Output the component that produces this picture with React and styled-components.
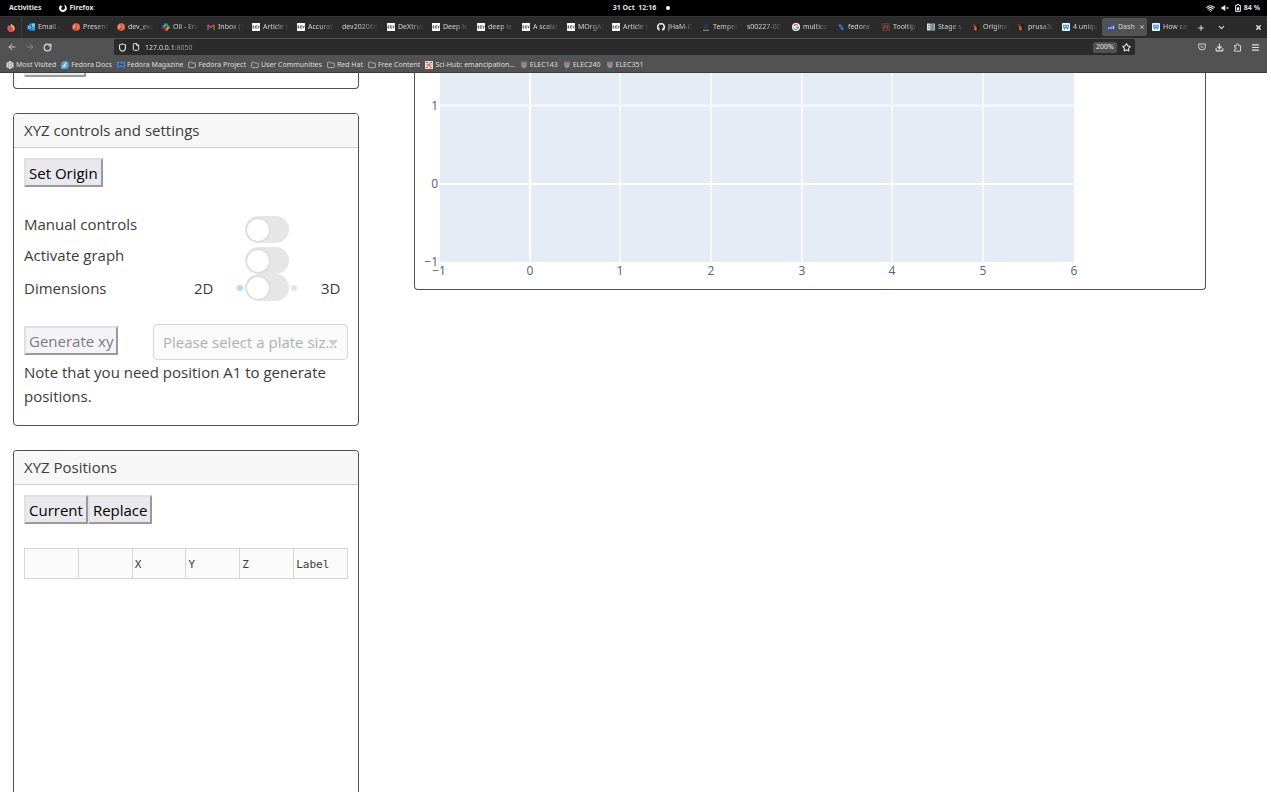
import React from "react";
import styled, { createGlobalStyle, css } from "styled-components";
import {
  ArrowLeft, ArrowRight, RotateCw, Shield, File, Star, Download, Puzzle, Menu,
  Plus, ChevronDown, X, Wifi, Settings, Folder,
} from "lucide-react";

const GlobalStyle = createGlobalStyle`
  *, *::before, *::after { box-sizing: border-box; }
  html, body { margin: 0; background: #fff; }
  button, input, select { font: inherit; margin: 0; }
  svg { display: block; flex: none; }
`;

const Desktop = styled.div`
  display: flex;
  flex-direction: column;
  height: calc(100vh - 5px);
  margin-right: 4px;
  overflow: hidden;
  font-family: "Noto Sans", sans-serif;
  font-size: 7px;
  line-height: 10px;
  color: #e0e0e0;
`;

const SystemBar = styled.header`
  display: grid;
  grid-template-columns: 1fr auto 1fr;
  align-items: center;
  flex: none;
  height: 16px;
  padding: 0 7px 0 9px;
  background: #000;
  font-weight: 700;
`;

const SystemGroup = styled.div`
  display: flex;
  align-items: center;
  justify-content: ${(p) => (p.$end ? "flex-end" : "flex-start")};
  gap: ${(p) => p.$gap}px;
`;

/* The empty side balances the notice dot, so that the clock stays centred. */
const Clock = styled(SystemGroup)`
  padding-left: 14px;
`;

const BarButton = styled.button`
  display: flex;
  align-items: center;
  justify-content: center;
  gap: 3px;
  padding: 0;
  border: 0;
  background: none;
  color: inherit;
  white-space: pre;
  opacity: ${(p) => (p.disabled ? 0.4 : 1)};
`;

const NoticeDot = styled.span`
  width: 4px;
  height: 4px;
  border-radius: 50%;
  background: #fff;
`;

const TabStrip = styled.nav`
  display: flex;
  align-items: stretch;
  flex: none;
  height: 22px;
  background: #2b2b2b;
  border-top: 1px solid #353535;
`;

const PinnedTab = styled(BarButton)`
  width: 22px;
  border-right: 1px solid #404040;
`;

const Tab = styled.button`
  display: flex;
  align-items: center;
  flex: 0 1 45px;
  gap: 3px;
  min-width: 0;
  margin: 1px 0 2px;
  padding: 0 2px 0 5px;
  border: 0;
  border-radius: 2px;
  background: ${(p) => (p.$active ? "#525252" : "transparent")};
  color: #d6d6d6;
`;

const TabTitle = styled.span`
  flex: 1 1 0;
  min-width: 0;
  overflow: hidden;
  text-align: left;
  white-space: nowrap;
  ${(p) => !p.$active && css`mask-image: linear-gradient(to right, #000 45%, transparent 96%);`}
`;

const StripActions = styled.div`
  display: flex;
  flex: 1;
  align-items: center;
  padding: 0 5px 0 5px;
  gap: 12px;
`;

const StripClose = styled(BarButton)`
  margin-left: auto;
`;

const Toolbar = styled.div`
  display: flex;
  align-items: center;
  flex: none;
  height: 18px;
  padding: 0 7px;
  background: #525252;
`;

const NavGroup = styled.div`
  display: flex;
  gap: 8px;
  width: 107px;
`;

const AddressBar = styled.div`
  display: flex;
  align-items: center;
  flex: 1;
  height: 16px;
  padding: 0 4px;
  gap: 5px;
  border-radius: 2px;
  background: #2b2b2b;
`;

/* The host is bright and the port that follows it is dimmed. */
const Address = styled.input`
  flex: 1;
  min-width: 0;
  height: 12px;
  padding: 0;
  border: 0;
  outline: 0;
  background: linear-gradient(to right, #f2f2f2 30px, #a0a0a0 30px);
  background-clip: text;
  -webkit-background-clip: text;
  color: transparent;
`;

const ZoomBadge = styled.button`
  width: 24px;
  height: 11px;
  padding: 0;
  border: 0;
  border-radius: 2px;
  background: #525252;
  color: #e6e6e6;
  line-height: 10px;
`;

const ToolGroup = styled.div`
  display: flex;
  justify-content: flex-end;
  gap: 9px;
  width: 125px;
`;

const Bookmarks = styled.nav`
  display: flex;
  align-items: center;
  flex: none;
  gap: 5px;
  height: 17px;
  padding: 2px 6px 0;
  background: #525252;
  border-bottom: 1px solid #3c3c3c;
`;

const Bookmark = styled.a`
  display: flex;
  align-items: center;
  gap: 2px;
  color: #dedede;
  text-decoration: none;
  white-space: nowrap;
`;

const Page = styled.main`
  display: grid;
  grid-template-columns: 346fr 792fr;
  grid-template-rows: 100%;
  column-gap: 55px;
  flex: 1;
  min-height: 0;
  padding: 0 61px 0 13px;
  overflow: hidden;
  background: #fff;
  color: #3b3b3b;
  font-family: "Open Sans", sans-serif;
  font-size: 15px;
  line-height: 24px;
`;

const Column = styled.div`
  display: flex;
  flex-direction: column;
  gap: 24px;
  min-width: 0;
`;

const Card = styled.section`
  flex: ${(p) => (p.$grow ? "1 0 auto" : "none")};
  border: 1px solid #505050;
  border-top-width: ${(p) => (p.$cutTop ? 0 : "1px")};
  border-bottom-width: ${(p) => (p.$grow ? 0 : "1px")};
  border-radius: ${(p) => (p.$cutTop ? "0 0 4px 4px" : p.$grow ? "4px 4px 0 0" : "4px")};
  overflow: hidden;
`;

const CardHeader = styled.h2`
  margin: 0;
  padding: 4px 10px 5px;
  border-bottom: 1px solid #cfcfcf;
  background: #f7f7f7;
  font-size: 15px;
  font-weight: 400;
  line-height: 24px;
`;

const CardBody = styled.div`
  padding: 10px 10px 17px;
`;

const ScrolledBody = styled.div`
  display: flex;
  align-items: flex-end;
  height: 15px;
  padding: 0 10px 11px;
`;

const ActionButton = styled.button`
  height: 29px;
  min-width: ${(p) => p.$minWidth || 0}px;
  padding: 0 3px;
  border: 2px solid;
  border-color: #e0e0e2 #9a9a9a #9a9a9a #e0e0e2;
  background: #e9e9ed;
  color: #000;
  line-height: 24px;
  white-space: nowrap;
  &:disabled { background: #f4f4f6; color: #7c7c80; }
`;

const ButtonRow = styled.div`
  display: flex;
`;

const SettingList = styled.div`
  padding: 25px 0 23px;
`;

const SettingRow = styled.div`
  display: grid;
  grid-template-columns: 170fr 43fr 84fr 27fr;
  align-items: ${(p) => (p.$centred ? "center" : "start")};
`;

const SwitchCell = styled.span`
  display: flex;
  align-items: center;
  gap: 2px;
  padding-top: ${(p) => (p.$low ? 4 : 0)}px;
`;

const EndDot = styled.span`
  width: 6px;
  height: 6px;
  border-radius: 50%;
  background: ${(p) => p.$color};
`;

const Switch = styled.input`
  appearance: none;
  display: flex;
  align-items: center;
  width: 44px;
  height: 27px;
  padding: 0 2px;
  border-radius: 14px;
  background: #e6e6e6;
  &::before {
    content: "";
    width: 22px;
    height: 22px;
    border-radius: 50%;
    background: #fff;
    box-shadow: 0 0 2px #bbb;
  }
  &:checked { justify-content: flex-end; background: #a6e0fb; }
`;

const PlateRow = styled.div`
  display: flex;
  align-items: flex-start;
  justify-content: space-between;
  > button { margin-top: 2px; }
`;

const SelectBox = styled.div`
  position: relative;
  flex: 0 1 195px;
  svg { position: absolute; right: 10px; top: 16px; }
`;

const PlateSelect = styled.select`
  appearance: none;
  display: block;
  width: 100%;
  height: 36px;
  padding: 0 9px;
  border: 1px solid #d6d6d6;
  border-radius: 4px;
  background: #fafafa;
  color: #b0b0b0;
  opacity: 1;
`;

const Note = styled.p`
  margin: 0;
`;

const PositionTable = styled.table`
  width: 100%;
  margin-top: 24px;
  border-collapse: collapse;
  table-layout: fixed;
  font-family: "DejaVu Sans Mono", monospace;
  font-size: 11px;
  line-height: 16px;
  th {
    height: 30px;
    padding: 2px 2px 0;
    border: 1px solid #d6d6d6;
    background: #fafafa;
    font-weight: 400;
    text-align: left;
  }
`;

const Chart = styled.svg`
  width: 100%;
  height: auto;
  text { fill: #506080; font-family: "Open Sans", sans-serif; font-size: 12px; }
`;

/* Favicons, each drawn on an 8 x 8 grid. */
const favicons = {
  firefox: (
    <>
      <path d="M.3 4.200Q.3 2.500 1.500 1.200l.6 1Q3.200 1.800 3.700.9L4.500.1Q5 1 6.200 1.800 7.800 3 7.700 4.700 7.200 7.900 4 7.900.7 7.800.3 4.200Z" fill="#ff5a36" />
      <path d="M3.700 1 4.500.1Q5 1 6.200 1.800 7.800 3 7.600 4.600 7.300 6.500 5.700 7 6.800 4.500 5.200 3 4 2.500 3.700 1Z" fill="#ffc52f" />
      <circle cx="3.800" cy="4.500" r="1.700" fill="#8a4be8" />
      <path d="M.4 4.500C.5 7 2.300 7.900 4 7.900c1.500 0 2.600-.8 3.100-1.700-1.400.9-3 .9-4 .2Z" fill="#f0355a" />
    </>
  ),
  outlook: (
    <>
      <path d="M2.500.5H8V7.500H2.500Z" fill="#28a8ea" />
      <path d="M5 .5h3v3H5Z" fill="#50d9ff" />
      <path d="M0 2h5v4.600H0Z" fill="#0f6cbd" />
      <circle cx="2.500" cy="4.300" r="1.200" fill="none" stroke="#fff" strokeWidth=".7" />
    </>
  ),
  powerpoint: (
    <>
      <circle cx="4.200" cy="4" r="3.800" fill="#ed6c47" />
      <path d="M0 2h4.600v4.400H0Z" fill="#c43e1c" />
      <path d="M1.800 5.800V2.700h.9a.8.8 0 0 1 0 1.700h-.9" fill="none" stroke="#fff" strokeWidth=".7" />
    </>
  ),
  slack: (
    <g strokeWidth="1.400" strokeLinecap="round">
      <path d="M3.100 1v2M.9 3.100h2.200" stroke="#36c5f0" />
      <path d="M5 3V.9M7.200 3.100H5.200" stroke="#2eb67d" />
      <path d="M5 5v2.200M5.200 5h2" stroke="#ecb22e" />
      <path d="M3.100 5v2.200M.9 5h2" stroke="#e01e5a" />
    </g>
  ),
  gmail: (
    <g fill="none" strokeWidth="1.300">
      <path d="M1 7V2" stroke="#4285f4" />
      <path d="M7 7V2" stroke="#34a853" />
      <path d="m.8 1.700 3.200 2.600 3.200-2.600" stroke="#ea4335" />
    </g>
  ),
  dev: (
    <>
      <path d="M0 0h8v8H0Z" fill="#fff" />
      <path d="M1 2.700v2.600h.5q1-1.300 0-2.600ZM4.900 2.700H3.600v2.600h1.300M3.600 4h1.100M5.700 2.600l.8 2.600.8-2.600" fill="none" stroke="#222" strokeWidth=".6" />
    </>
  ),
  github: (
    <path d="M4 0a4 4 0 0 0-1.300 7.800V6.700C1.700 6.900 1.400 6 1.200 5.800c.6-.1.800.9 1.500.5.1-.4.200-.5.400-.6C1.400 5.400 1.100 3.200 2 2.500V1.400l1.100.4h1.800L6 1.400v1.100c.9.800.6 2.900-1.100 3.200.4.300.4.800.4 2.100A4 4 0 0 0 4 0Z" fill="#f4f4f4" />
  ),
  stack: (
    <>
      <path d="M2.500 1h3L7 3.500 5.500 5.500h-3L1 3.500Z" fill="#193a5c" />
      <path d="M1 7.300h6" stroke="#e08a32" />
    </>
  ),
  google: (
    <>
      <circle cx="4" cy="4" r="4" fill="#fff" />
      <g fill="none" strokeWidth="1.200">
        <path d="M5.800 2.300A2.500 2.500 0 0 0 1.800 2.800" stroke="#ea4335" />
        <path d="M1.800 2.800a2.500 2.500 0 0 0 0 2.500" stroke="#fbbc05" />
        <path d="M1.800 5.300a2.500 2.500 0 0 0 3.800.6" stroke="#34a853" />
        <path d="M5.600 5.900q.9-.7.9-1.800H4" stroke="#4285f4" />
      </g>
    </>
  ),
  fedoraforum: (
    <>
      <path d="M1.500 1h3l2.500 4v2H4L2 4Z" fill="#294f91" />
      <path d="m2 2 2 1.500M4 5l2 1" stroke="#9ab8e8" strokeWidth=".6" />
    </>
  ),
  plotly: (
    <>
      <path d="M.5.5h7v7h-7Z" fill="#3a2c2c" stroke="#7d4040" strokeWidth=".6" />
      <path d="M2.200 1.500v5M5.800 1.500v5M2.500 4h3" stroke="#a06060" strokeWidth=".8" />
    </>
  ),
  stage: (
    <>
      <path d="M0 .5h3.600v7H0Z" fill="#d9e4ea" />
      <path d="M4.200.5H8v7H4.200Z" fill="#9bb3c0" />
      <path d="M5 2h2M5 4h2M5 6h2M1 2.500h1.600M1 5h1.600" stroke="#40596a" strokeWidth=".8" />
    </>
  ),
  prusa: (
    <>
      <path d="M.8.300 3 1.500v3L1.500 3Z" fill="#8a3a1c" />
      <path d="M2.500 2.500Q5 3.500 4.800 5.500L4 8 2 6.500Z" fill="#d9602c" />
      <path d="M5.200 1.500h1.300v5H5.200Z" fill="#161616" />
    </>
  ),
  wps: (
    <>
      <rect width="8" height="8" rx="1" fill="#f5f8ff" />
      <path d="M1 2.300h6M1.300 3l1.200 2.800L4 3.500l1.500 2.300L6.700 3" fill="none" stroke="#2f8cf0" strokeWidth="1.100" />
    </>
  ),
  dash: (
    <>
      <rect width="8" height="8" rx="1" fill="#3b5382" />
      <path d="M1.500 6V4.500M3.200 6V4M4.900 6V3.500M6.600 6V2.500" stroke="#c3d2ef" />
    </>
  ),
  fedora: (
    <>
      <path d="M4 0a4 4 0 1 1 0 8H0V4a4 4 0 0 1 4-4Z" fill="#51a2da" />
      <path d="M5.800 2.200C4.600 1.600 4 2.300 4 3.100V5c0 1.300-1.600 1.500-1.900.5-.2-.9.500-1.400 1.600-1.200h1.500" fill="none" stroke="#fff" strokeWidth=".9" />
    </>
  ),
  magazine: (
    <>
      <path d="M0 .7h8v6.800L6.500 6H1.500L0 7.500Z" fill="#4a80cc" />
      <path d="M2.300 5V2.500L4 3.700l1.700-1.200V5" fill="none" stroke="#1c3560" />
    </>
  ),
  scihub: (
    <>
      <path d="M0 0h8v8H0Z" fill="#f0d3d0" />
      <path d="M1 1.500h2M5 1.500h2M1 6.500h2M5 6.500h2M1.500 4h1.500M5 4h1.500M4 2.500v3M3 3l2 2" stroke="#b24f4b" strokeWidth=".9" />
    </>
  ),
  elec: (
    <>
      <path d="M1 .5h6V5Q6 7 4 7.800 2 7 1 5Z" fill="#4a86b8" />
      <path d="M1 2h6v2H1Z" fill="#e06a45" />
      <path d="M2.500 5.200h3" stroke="#e9c070" strokeWidth=".9" />
    </>
  ),
};

const Favicon = ({ name }) => (
  <svg width="8" height="8" viewBox="0 0 8 8" aria-hidden="true">{favicons[name]}</svg>
);

const tabs = [
  ["outlook", "Email -"], ["powerpoint", "Present"], ["powerpoint", "dev_eva"],
  ["slack", "Oli - Eng"], ["gmail", "Inbox (1"], ["dev", "Article t"],
  ["dev", "Accurate"], [null, "dev202068"], ["dev", "DeXtrus"],
  ["dev", "Deep le"], ["dev", "deep le"], ["dev", "A scalab"],
  ["dev", "MOrgAn"], ["dev", "Article t"], ["github", "JHaM-C"],
  ["stack", "Temper"], [null, "s00227-00"], ["google", "multicol"],
  ["fedoraforum", "fedora -"], ["plotly", "Tooltip"], ["stage", "Stage s"],
  ["prusa", "Original"], ["prusa", "prusa3d"], ["wps", "4 uniqu"],
  ["dash", "Dash"], ["wps", "How can"],
];

const bookmarks = [
  ["settings", "Most Visited"], ["fedora", "Fedora Docs"], ["magazine", "Fedora Magazine"],
  ["folder", "Fedora Project"], ["folder", "User Communities"], ["folder", "Red Hat"],
  ["folder", "Free Content"], ["scihub", "Sci-Hub: emancipation…"],
  ["elec", "ELEC143"], ["elec", "ELEC240"], ["elec", "ELEC351"],
];

const BookmarkIcon = ({ name }) => {
  if (name === "folder") return <Folder size={8} />;
  if (name === "settings") return <Settings size={8} strokeWidth={4} />;
  return <Favicon name={name} />;
};

const FirefoxMark = () => (
  <svg width="8" height="8" viewBox="0 0 8 8" aria-hidden="true">
    <path d="M1.500 1.300A3.800 3.800 0 1 0 7 2L5.500.2v1.700C6.700 4 5.500 5.900 4 5.900S1.900 4.800 2.300 3.500l1.500-.4Z" fill="#eee" />
  </svg>
);

const MutedSpeaker = () => (
  <svg width="8" height="8" viewBox="0 0 8 8" aria-hidden="true">
    <path d="M.5 2.700H2L4.300.8v6.400L2 5.300H.5Z" fill="#eee" />
    <path d="m5.500 3 2 2m0-2-2 2" stroke="#ccc" strokeWidth=".9" />
  </svg>
);

const Battery = () => (
  <svg width="6" height="8" viewBox="0 0 6 8" aria-hidden="true">
    <path d="M.6 1.400H2V.5h2v.9h1.400v6H.6Z" fill="none" stroke="#eee" />
    <path d="M1.800 3.300h2.400v3H1.800Z" fill="#eee" />
  </svg>
);

const Pocket = () => (
  <svg width="8" height="8" viewBox="0 0 8 8" fill="none" stroke="currentColor" strokeWidth=".9" aria-hidden="true">
    <path d="M.6 1h6.800v2.500a3.400 3.400 0 0 1-6.800 0Z" />
    <path d="m2.300 3 1.700 1.700L5.700 3" />
  </svg>
);

const Extension = () => (
  <svg width="9" height="9" viewBox="0 0 9 9" fill="none" stroke="currentColor" strokeWidth=".9" aria-hidden="true">
    <path d="M1.500 8.200V6.200h.7a1 1 0 0 0 0-2h-.7V2.600h2V1.700a1 1 0 0 1 2 0v.9h2v5.600Z" />
  </svg>
);

const columnLines = [115, 205, 296, 387, 477, 568];
const xTicks = [["−1", 24], ["0", 115], ["1", 205], ["2", 296], ["3", 387], ["4", 477], ["5", 568], ["6", 659]];
const yTicks = [["1", 33], ["0", 111], ["−1", 189]];

const PositionChart = () => (
  <Chart viewBox="0 0 790 216" role="img" aria-label="XY position graph">
    <rect x="25" y="0" width="634" height="189" fill="#e5ecf6" />
    {columnLines.map((x, i) => (
      <line key={x} x1={x} x2={x} y1="0" y2="189" stroke="#fff" strokeWidth={i ? 1.3 : 2} />
    ))}
    <line x1="25" x2="659" y1="32.5" y2="32.5" stroke="#fff" strokeWidth="1.3" />
    <line x1="25" x2="659" y1="111" y2="111" stroke="#fff" strokeWidth="2" />
    {xTicks.map(([t, x]) => <text key={t} x={x} y="202" textAnchor="middle">{t}</text>)}
    {yTicks.map(([t, y]) => <text key={t} x="23" y={y + 4} textAnchor="end">{t}</text>)}
  </Chart>
);

export default function App() {
  return (
    <Desktop>
      <GlobalStyle />
      <SystemBar>
        <SystemGroup $gap={17}>
          <BarButton>Activities</BarButton>
          <BarButton><FirefoxMark />Firefox</BarButton>
        </SystemGroup>
        <Clock $gap={10}>
          <BarButton>{"31 Oct  12:16"}</BarButton>
          <NoticeDot />
        </Clock>
        <SystemGroup $gap={6} $end>
          <Wifi size={9} strokeWidth={3} />
          <MutedSpeaker />
          <BarButton><Battery />84 %</BarButton>
        </SystemGroup>
      </SystemBar>

      <TabStrip aria-label="Tabs">
        <PinnedTab aria-label="Firefox View"><Favicon name="firefox" /></PinnedTab>
        {tabs.map(([icon, title], i) => {
          const active = title === "Dash";
          return (
            <Tab key={i} $active={active}>
              {icon && <Favicon name={icon} />}
              <TabTitle $active={active}>{title}</TabTitle>
              {active && <X size={6} strokeWidth={3} />}
            </Tab>
          );
        })}
        <StripActions>
          <BarButton aria-label="New tab"><Plus size={8} strokeWidth={3} /></BarButton>
          <BarButton aria-label="List all tabs"><ChevronDown size={9} strokeWidth={3} /></BarButton>
          <StripClose aria-label="Close window"><X size={7} strokeWidth={5} /></StripClose>
        </StripActions>
      </TabStrip>

      <Toolbar>
        <NavGroup>
          <BarButton aria-label="Back"><ArrowLeft size={10} /></BarButton>
          <BarButton aria-label="Forward" disabled><ArrowRight size={10} /></BarButton>
          <BarButton aria-label="Reload"><RotateCw size={9} strokeWidth={3} /></BarButton>
        </NavGroup>
        <AddressBar>
          <Shield size={9} strokeWidth={3} />
          <File size={8} strokeWidth={3} />
          <Address aria-label="Address" defaultValue="127.0.0.1:8050" />
          <ZoomBadge>200%</ZoomBadge>
          <BarButton aria-label="Bookmark this page"><Star size={9} strokeWidth={3} /></BarButton>
        </AddressBar>
        <ToolGroup>
          <BarButton aria-label="Save to Pocket"><Pocket /></BarButton>
          <BarButton aria-label="Downloads"><Download size={9} strokeWidth={3} /></BarButton>
          <BarButton aria-label="Extensions"><Extension /></BarButton>
          <BarButton aria-label="Menu"><Menu size={9} strokeWidth={3} /></BarButton>
        </ToolGroup>
      </Toolbar>

      <Bookmarks aria-label="Bookmarks">
        {bookmarks.map(([icon, title]) => (
          <Bookmark key={title} href="#"><BookmarkIcon name={icon} />{title}</Bookmark>
        ))}
      </Bookmarks>

      <Page>
        <Column>
          <Card $cutTop>
            <ScrolledBody><ActionButton $minWidth={62} aria-label="Apply" /></ScrolledBody>
          </Card>

          <Card>
            <CardHeader>XYZ controls and settings</CardHeader>
            <CardBody>
              <ButtonRow>
                <ActionButton>Set Origin</ActionButton>
              </ButtonRow>
              <SettingList>
                <SettingRow>
                  <label htmlFor="manual">Manual controls</label>
                  <span />
                  <SwitchCell $low>
                    <EndDot $color="transparent" />
                    <Switch id="manual" type="checkbox" role="switch" />
                  </SwitchCell>
                </SettingRow>
                <SettingRow>
                  <label htmlFor="graph">Activate graph</label>
                  <span />
                  <SwitchCell $low>
                    <EndDot $color="transparent" />
                    <Switch id="graph" type="checkbox" role="switch" />
                  </SwitchCell>
                </SettingRow>
                <SettingRow $centred>
                  <label htmlFor="dimensions">Dimensions</label>
                  <span>2D</span>
                  <SwitchCell>
                    <EndDot $color="#a6e0fb" />
                    <Switch id="dimensions" type="checkbox" role="switch" />
                    <EndDot $color="#e6e6e6" />
                  </SwitchCell>
                  <span>3D</span>
                </SettingRow>
              </SettingList>
              <PlateRow>
                <ActionButton disabled>Generate xy</ActionButton>
                <SelectBox>
                  <PlateSelect aria-label="Plate size" disabled>
                    <option>Please select a plate siz...</option>
                  </PlateSelect>
                  <svg width="10" height="6" viewBox="0 0 10 6" aria-hidden="true">
                    <path d="M0 0h10L5 6Z" fill="#cfcfcf" />
                  </svg>
                </SelectBox>
              </PlateRow>
              <Note>Note that you need position A1 to generate positions.</Note>
            </CardBody>
          </Card>

          <Card $grow>
            <CardHeader>XYZ Positions</CardHeader>
            <CardBody>
              <ButtonRow>
                <ActionButton>Current</ActionButton>
                <ActionButton>Replace</ActionButton>
              </ButtonRow>
              <PositionTable>
                <thead>
                  <tr>
                    <th /><th /><th>X</th><th>Y</th><th>Z</th><th>Label</th>
                  </tr>
                </thead>
              </PositionTable>
            </CardBody>
          </Card>
        </Column>

        <Column>
          <Card $cutTop>
            <PositionChart />
          </Card>
        </Column>
      </Page>
    </Desktop>
  );
}
